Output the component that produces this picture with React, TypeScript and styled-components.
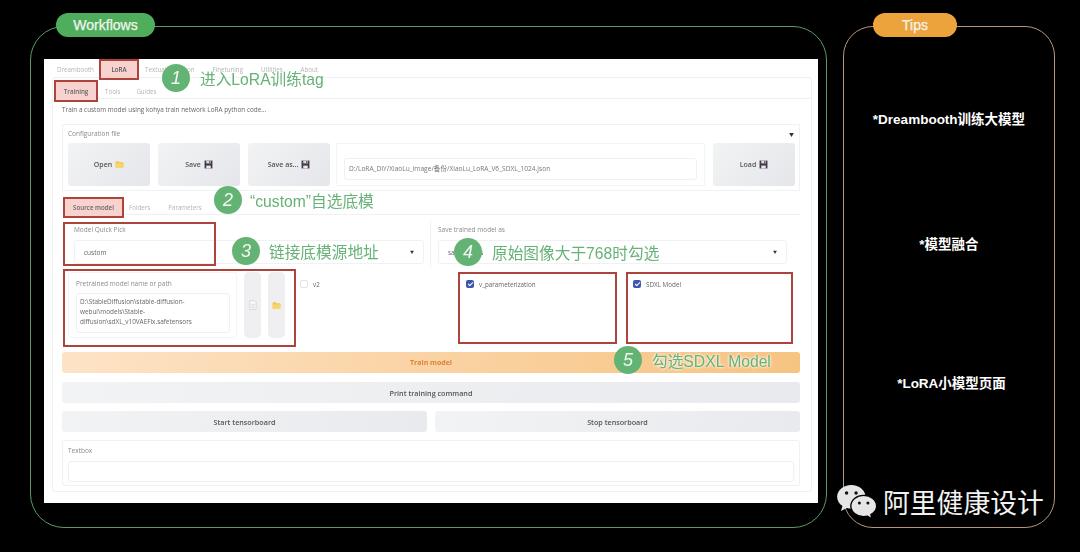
import styled, { createGlobalStyle } from "styled-components";

const GlobalStyle = createGlobalStyle`
	html, body {
		margin: 0;
		padding: 0;
		background: #000;
	}
	* {
		box-sizing: border-box;
	}
`;

const uiFont = `"Open Sans", "Noto Sans", "Noto Sans CJK SC", sans-serif`;
const slideFont = `"Liberation Sans", "Noto Sans CJK SC", sans-serif`;

function FolderIcon({ size = 9 }: { size?: number }) {
	return (
		<svg width={size} height={size} viewBox="0 0 16 16">
			<path d="M1 3.500C1 2.700 1.600 2 2.400 2h4l1.600 2h5.600c.8 0 1.400.6 1.400 1.400v7.200c0 .8-.6 1.400-1.400 1.400H2.400C1.600 14 1 13.400 1 12.600z" fill="#f3c64f" />
			<path d="M1 6h14v6.600c0 .8-.6 1.400-1.400 1.400H2.400C1.600 14 1 13.400 1 12.600z" fill="#f7d56e" />
		</svg>
	);
}

function FloppyIcon() {
	return (
		<svg width="9" height="9" viewBox="0 0 16 16">
			<path d="M1 1h14v14H1z" fill="#3d3d4a" />
			<path d="M4 1h8v5H4z" fill="#e9d3dc" />
			<path d="M9 2h2v3H9z" fill="#3d3d4a" />
			<path d="M4 10h8v5H4z" fill="#f1e4ea" />
		</svg>
	);
}

function DocIcon() {
	return (
		<svg width="8" height="10" viewBox="0 0 12 16">
			<path d="M1 1h7l3 3v11H1z" fill="#fafafa" stroke="#c9c9c9" />
			<path d="M3 7h6M3 9.500h6M3 12h6" stroke="#cfcfcf" />
		</svg>
	);
}

function WechatIcon() {
	return (
		<svg width="42" height="36" viewBox="0 0 44 38">
			<path d="M16 1C7.700 1 1 6.600 1 13.500c0 4 2.200 7.500 5.700 9.800L5 28.500l6.300-3.200c1.500.4 3 .6 4.700.6 8.300 0 15-5.600 15-12.400S24.300 1 16 1z" fill="#e6e6e6" />
			<path d="M29 12c-7.500 0-13.500 5-13.500 11.200S21.500 34.400 29 34.400c1.400 0 2.700-.2 4-.5l4.800 2.800-1.200-4.500c3.800-2 6.100-5.200 6.100-9 0-6.200-6.200-11.200-13.700-11.200z" fill="#e6e6e6" stroke="#000" strokeWidth="1.400" />
			<circle cx="11" cy="9.500" r="1.800" fill="#111" />
			<circle cx="21" cy="9.500" r="1.800" fill="#111" />
			<circle cx="24.500" cy="20" r="1.600" fill="#111" />
			<circle cx="33.500" cy="20" r="1.600" fill="#111" />
		</svg>
	);
}

function App() {
	return (
		<Page>
			<GlobalStyle />
			<WorkflowFrame>
				<Pill $color="#4fae5b" $left={25} $width={99}>
					Workflows
				</Pill>
				<Panel>
					<TopTabs>
						<TopTab>Dreambooth</TopTab>
						<TopTab $active>LoRA</TopTab>
						<TopTab>Textual Inversion</TopTab>
						<TopTab>Finetuning</TopTab>
						<TopTab>Utilities</TopTab>
						<TopTab>About</TopTab>
					</TopTabs>
					<Body>
						<SubTabs>
							<SubTab $active>Training</SubTab>
							<SubTab>Tools</SubTab>
							<SubTab>Guides</SubTab>
						</SubTabs>
						<Content>
							<Description>Train a custom model using kohya train network LoRA python code…</Description>
							<ConfigGroup>
								<GroupHead>
									<FieldLabel>Configuration file</FieldLabel>
									<Caret>▼</Caret>
								</GroupHead>
								<ConfigRow>
									<BigButton>
										Open <FolderIcon />
									</BigButton>
									<BigButton>
										Save <FloppyIcon />
									</BigButton>
									<BigButton>
										Save as... <FloppyIcon />
									</BigButton>
									<PathBlock>
										<PathInput>D:/LoRA_DIY/XiaoLu_image/备份/XiaoLu_LoRA_V6_SDXL_1024.json</PathInput>
									</PathBlock>
									<BigButton>
										Load <FloppyIcon />
									</BigButton>
								</ConfigRow>
							</ConfigGroup>
							<SourceTabs>
								<SourceTab $active>Source model</SourceTab>
								<SourceTab>Folders</SourceTab>
								<SourceTab>Parameters</SourceTab>
							</SourceTabs>
							<SelectRow>
								<SelectBlock>
									<FieldLabel>Model Quick Pick</FieldLabel>
									<Select>
										custom<SelectCaret>▼</SelectCaret>
									</Select>
								</SelectBlock>
								<SelectBlock>
									<FieldLabel>Save trained model as</FieldLabel>
									<Select>
										safetensors<SelectCaret>▼</SelectCaret>
									</Select>
								</SelectBlock>
							</SelectRow>
							<ModelRow>
								<PathGroup>
									<FieldLabel>Pretrained model name or path</FieldLabel>
									<PathArea>
										D:\StableDiffusion\stable-diffusion-
										<br />
										webui\models\Stable-
										<br />
										diffusion\sdXL_v10VAEFix.safetensors
									</PathArea>
								</PathGroup>
								<ToolButton>
									<DocIcon />
								</ToolButton>
								<ToolButton>
									<FolderIcon />
								</ToolButton>
								<CheckCell $width={166}>
									<EmptyBox />v2
								</CheckCell>
								<CheckCell $width={167}>
									<CheckedBox>
										<CheckMark />
									</CheckedBox>
									v_parameterization
								</CheckCell>
								<CheckCell $width={158}>
									<CheckedBox>
										<CheckMark />
									</CheckedBox>
									SDXL Model
								</CheckCell>
							</ModelRow>
							<TrainButton>Train model</TrainButton>
							<WideButton>Print training command</WideButton>
							<BoardRow>
								<WideButton>Start tensorboard</WideButton>
								<WideButton>Stop tensorboard</WideButton>
							</BoardRow>
							<TextGroup>
								<FieldLabel>Textbox</FieldLabel>
								<TextInput />
							</TextGroup>
						</Content>
					</Body>

					<RedBox $x={19} $y={163} $w={153} $h={44} />
					<RedBox $x={19} $y={210} $w={233} $h={78} />
					<RedBox $x={414} $y={213} $w={159} $h={72} />
					<RedBox $x={582} $y={213} $w={167} $h={72} />

					<Callout $x={118} $y={5} $gap={10}>
						<Circle>1</Circle>
						<CalloutText>进入LoRA训练tag</CalloutText>
					</Callout>
					<Callout $x={170} $y={127} $gap={8}>
						<Circle>2</Circle>
						<CalloutText>“custom”自选底模</CalloutText>
					</Callout>
					<Callout $x={188} $y={178} $gap={9}>
						<Circle>3</Circle>
						<CalloutText>链接底模源地址</CalloutText>
					</Callout>
					<Callout $x={410} $y={179} $gap={10}>
						<Circle>4</Circle>
						<CalloutText>原始图像大于768时勾选</CalloutText>
					</Callout>
					<Callout $x={570} $y={287} $gap={10}>
						<Circle>5</Circle>
						<CalloutText>勾选SDXL Model</CalloutText>
					</Callout>
				</Panel>
			</WorkflowFrame>
			<TipsFrame>
				<Pill $color="#eda33c" $left={29} $width={84}>
					Tips
				</Pill>
				<Tip $top={83}>*Dreambooth训练大模型</Tip>
				<Tip $top={105}>*模型融合</Tip>
				<Tip $top={119} $shift={5}>
					*LoRA小模型页面
				</Tip>
			</TipsFrame>
			<Watermark>
				<WechatIcon />
				<WatermarkText>阿里健康设计</WatermarkText>
			</Watermark>
		</Page>
	);
}

const Page = styled.div`
	position: relative;
	width: 1080px;
	height: 552px;
	overflow: hidden;
	background: #000;
	display: flex;
	align-items: flex-start;
	gap: 16px;
	padding: 26px 0 0 30px;
`;

const WorkflowFrame = styled.div`
	position: relative;
	width: 797px;
	height: 502px;
	border: 1px solid #5c9a64;
	border-radius: 34px;
	padding: 32px 0 0 13px;
`;

const TipsFrame = styled.div`
	position: relative;
	width: 212px;
	height: 502px;
	border: 1px solid #b8967a;
	border-radius: 30px;
	display: flex;
	flex-direction: column;
	align-items: center;
`;

const Pill = styled.div<{ $color: string; $left: number; $width: number }>`
	position: absolute;
	top: -14px;
	left: ${(p) => p.$left}px;
	width: ${(p) => p.$width}px;
	height: 24px;
	border-radius: 12px;
	background: ${(p) => p.$color};
	color: #f2f5ee;
	font: 14px ${slideFont};
	-webkit-text-stroke: 0.25px #f2f5ee;
	display: flex;
	align-items: center;
	justify-content: center;
`;

const Tip = styled.div<{ $top: number; $shift?: number }>`
	height: 20px;
	margin-top: ${(p) => p.$top}px;
	margin-left: ${(p) => p.$shift ?? 0}px;
	color: #fff;
	font: bold 13.5px/20px ${slideFont};
`;

const Panel = styled.div`
	position: relative;
	width: 774px;
	height: 444px;
	background: #fff;
	font-family: ${uiFont};
	filter: blur(0.4px);
`;

const TopTabs = styled.div`
	display: flex;
	height: 21px;
	padding-left: 4px;
`;

const TopTab = styled.div<{ $active?: boolean }>`
	display: flex;
	align-items: center;
	height: 21px;
	margin: ${(p) => (p.$active ? "0 -3px 0 -4px" : "0")};
	padding: 0 ${(p) => (p.$active ? 10.5 : 9)}px;
	font-size: 6.2px;
	color: ${(p) => (p.$active ? "#555" : "#b4b4b4")};
	font-weight: ${(p) => (p.$active ? 600 : 400)};
	background: ${(p) => (p.$active ? "#f8d2cf" : "transparent")};
	border: ${(p) => (p.$active ? "2px solid #ad443b" : "none")};
	position: relative;
	z-index: 1;
`;

const Body = styled.div`
	width: 760px;
	height: 415px;
	margin: -3px 0 0 8px;
	border: 1px solid #f0f1f3;
	border-radius: 3px;
	padding-top: 2px;
`;

const SubTabs = styled.div`
	display: flex;
	height: 19px;
	padding-left: 1px;
	border-bottom: 1px solid #f0f1f3;
`;

const SubTab = styled.div<{ $active?: boolean }>`
	display: flex;
	align-items: center;
	justify-content: center;
	height: 22px;
	width: ${(p) => (p.$active ? "44px" : "auto")};
	margin-right: ${(p) => (p.$active ? -1 : 0)}px;
	padding: 0 ${(p) => (p.$active ? 0 : 8)}px;
	font-size: 6.2px;
	color: ${(p) => (p.$active ? "#666" : "#b4b4b4")};
	font-weight: ${(p) => (p.$active ? 600 : 400)};
	background: ${(p) => (p.$active ? "#f8d2cf" : "transparent")};
	border: ${(p) => (p.$active ? "2px solid #ad443b" : "none")};
	position: relative;
	z-index: 1;
`;

const Content = styled.div`
	padding: 0 11px 0 9px;
	display: flex;
	flex-direction: column;
`;

const Description = styled.div`
	margin-top: 6px;
	height: 10px;
	line-height: 10px;
	font-size: 6.4px;
	color: #666;
	white-space: nowrap;
`;

const ConfigGroup = styled.div`
	margin-top: 9px;
	height: 67px;
	border: 1px solid #f0f1f3;
	padding: 2px 5px;
`;

const GroupHead = styled.div`
	display: flex;
	justify-content: space-between;
	align-items: center;
	height: 13px;
`;

const FieldLabel = styled.div`
	font-size: 6.5px;
	line-height: 10px;
	color: #8a8a8a;
	white-space: nowrap;
`;

const Caret = styled.span`
	font-size: 5px;
	color: #333;
`;

const ConfigRow = styled.div`
	display: flex;
	gap: 8px;
	margin-top: 3px;
`;

const BigButton = styled.div`
	flex: none;
	width: 82px;
	height: 43px;
	border-radius: 3px;
	background: linear-gradient(135deg, #f2f3f5, #e4e6e9);
	display: flex;
	align-items: center;
	justify-content: center;
	gap: 3px;
	font-size: 7px;
	font-weight: 600;
	color: #555;
`;

const PathBlock = styled.div`
	flex: none;
	width: 369px;
	height: 43px;
	margin-left: -2px;
	border: 1px solid #f3f4f6;
	padding: 14px 7px 4px;
`;

const PathInput = styled.div`
	height: 22px;
	border: 1px solid #eef0f2;
	border-radius: 3px;
	padding-left: 4px;
	font-size: 6.6px;
	line-height: 20px;
	color: #777;
	white-space: nowrap;
`;

const SourceTabs = styled.div`
	display: flex;
	height: 18px;
	margin-top: 6px;
	border-bottom: 1px solid #f0f1f3;
`;

const SourceTab = styled.div<{ $active?: boolean }>`
	display: flex;
	align-items: center;
	justify-content: center;
	height: 21px;
	width: ${(p) => (p.$active ? "61px" : "auto")};
	margin: ${(p) => (p.$active ? "0 -4px 0 1px" : "0")};
	padding: 0 ${(p) => (p.$active ? 0 : 9)}px;
	font-size: 6.2px;
	color: ${(p) => (p.$active ? "#666" : "#b4b4b4")};
	font-weight: ${(p) => (p.$active ? 600 : 400)};
	background: ${(p) => (p.$active ? "#f8d2cf" : "transparent")};
	border: ${(p) => (p.$active ? "2px solid #ad443b" : "none")};
	position: relative;
	z-index: 1;
`;

const SelectRow = styled.div`
	display: grid;
	grid-template-columns: 369px 369px;
	height: 46px;
	margin-top: 6px;
`;

const SelectBlock = styled.div`
	border-right: 1px solid #f0f1f3;
	padding: 4px 6px 0 12px;
	&:last-child {
		border-right: none;
		padding-left: 7px;
		padding-right: 13px;
	}
`;

const Select = styled.div`
	display: flex;
	justify-content: space-between;
	align-items: center;
	height: 24px;
	margin-top: 5px;
	padding: 0 9px;
	border: 1px solid #f0f1f3;
	border-radius: 3px;
	font-size: 6.5px;
	color: #666;
`;

const SelectCaret = styled.span`
	font-size: 4px;
	color: #333;
`;

const ModelRow = styled.div`
	display: flex;
	height: 74px;
	margin-top: 3px;
	padding-left: 6px;
	align-items: flex-start;
`;

const PathGroup = styled.div`
	flex: none;
	width: 169px;
	height: 66px;
	margin-top: 2px;
	border: 1px solid #f3f4f6;
	border-radius: 3px;
	padding: 6px 6px 0 7px;
`;

const PathArea = styled.div`
	height: 40px;
	margin-top: 4px;
	padding: 3px 3px;
	border: 1px solid #f0f1f3;
	border-radius: 3px;
	font-size: 6.4px;
	line-height: 10px;
	color: #666;
	white-space: nowrap;
`;

const ToolButton = styled.div`
	flex: none;
	width: 17px;
	height: 66px;
	margin: 2px 0 0 7px;
	border-radius: 5px;
	background: #efeff1;
	display: flex;
	align-items: center;
	justify-content: center;
`;

const CheckCell = styled.div<{ $width: number }>`
	flex: none;
	width: ${(p) => p.$width}px;
	display: flex;
	align-items: center;
	gap: 5px;
	height: 12px;
	margin-top: 8px;
	padding-left: 15px;
	font-size: 6.3px;
	color: #666;
`;

const EmptyBox = styled.span`
	width: 8px;
	height: 8px;
	border: 1px solid #e4e4e4;
	border-radius: 2px;
	background: #fff;
`;

const CheckedBox = styled.span`
	width: 8px;
	height: 8px;
	border-radius: 2px;
	background: #3c56b0;
	display: flex;
	align-items: center;
	justify-content: center;
`;

const CheckMark = styled.span`
	width: 5px;
	height: 3px;
	margin-top: -1px;
	border-left: 1px solid #fff;
	border-bottom: 1px solid #fff;
	transform: rotate(-45deg);
`;

const TrainButton = styled.div`
	height: 21px;
	margin-top: 8px;
	border-radius: 3px;
	background: linear-gradient(100deg, #fde3c6, #f7c381);
	display: flex;
	align-items: center;
	justify-content: center;
	font-size: 7px;
	font-weight: 700;
	color: #dd8136;
`;

const WideButton = styled.div`
	flex: 1 0 21px;
	height: 21px;
	margin-top: 9px;
	border-radius: 3px;
	background: linear-gradient(100deg, #f1f3f5, #e8eaed);
	display: flex;
	align-items: center;
	justify-content: center;
	font-size: 7.2px;
	font-weight: 600;
	color: #555;
`;

const BoardRow = styled.div`
	display: flex;
	gap: 8px;
	margin-top: -1px;
`;

const TextGroup = styled.div`
	height: 46px;
	margin-top: 8px;
	border: 1px solid #f0f1f3;
	border-radius: 3px;
	padding: 5px 5px 0;
`;

const TextInput = styled.div`
	height: 21px;
	margin-top: 5px;
	border: 1px solid #eef0f2;
	border-radius: 3px;
`;

const RedBox = styled.div<{ $x: number; $y: number; $w: number; $h: number }>`
	position: absolute;
	left: ${(p) => p.$x}px;
	top: ${(p) => p.$y}px;
	width: ${(p) => p.$w}px;
	height: ${(p) => p.$h}px;
	border: 2px solid #ad443b;
`;

const Callout = styled.div<{ $x: number; $y: number; $gap: number }>`
	position: absolute;
	left: ${(p) => p.$x}px;
	top: ${(p) => p.$y}px;
	display: flex;
	align-items: center;
	gap: ${(p) => p.$gap}px;
	white-space: nowrap;
	z-index: 2;
`;

const Circle = styled.div`
	width: 28px;
	height: 28px;
	border-radius: 50%;
	background: #62b374;
	color: #f4f8f1;
	font: italic 18px ${slideFont};
	display: flex;
	align-items: center;
	justify-content: center;
`;

const CalloutText = styled.span`
	font: 15.7px ${slideFont};
	color: #66b277;
	text-shadow: 0 0 3px #fff, 0 0 3px #fff;
`;

const Watermark = styled.div`
	position: absolute;
	left: 836px;
	top: 484px;
	display: flex;
	align-items: center;
	gap: 5px;
`;

const WatermarkText = styled.span`
	font: 26.800px/34px "Noto Sans CJK SC", sans-serif;
	color: #f2f2f2;
	white-space: nowrap;
`;

export default App;
